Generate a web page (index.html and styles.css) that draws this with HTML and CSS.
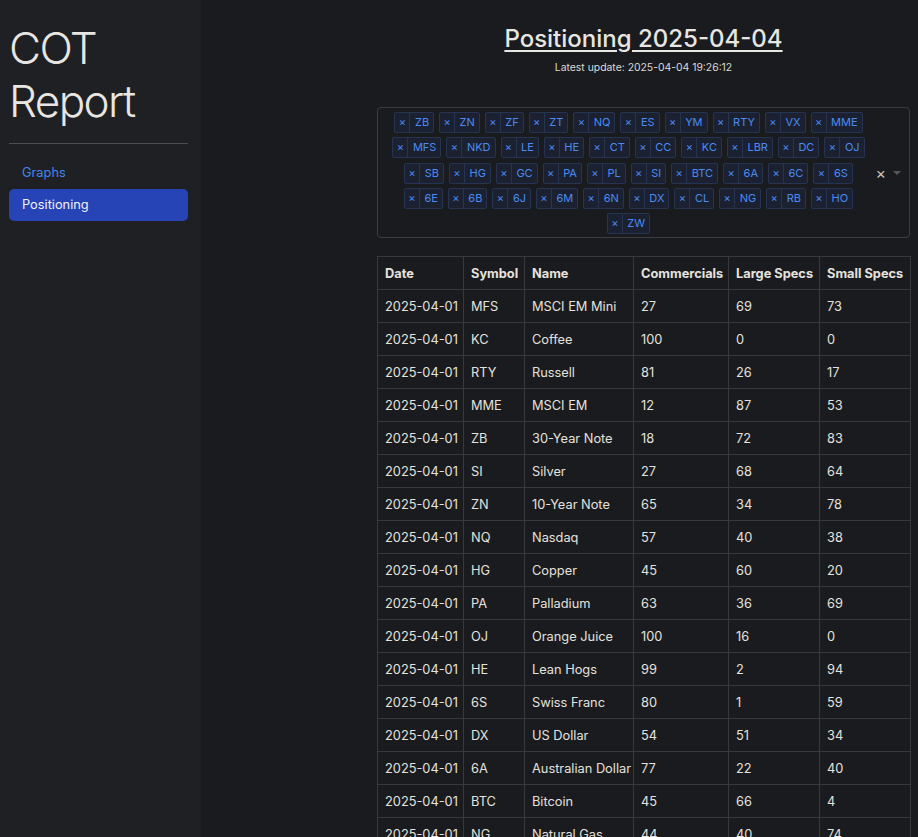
FILE: index.html
```html
<!DOCTYPE html>
<html lang="en">
<head>
<meta charset="utf-8">
<title>COT Report</title>
<link rel="stylesheet" href="styles.css">
</head>
<body>
<div class="app">
  <aside class="sidebar">
    <h1 class="brand">COT Report</h1>
    <hr class="rule">
    <nav class="nav">
      <a class="nav-link" href="#">Graphs</a>
      <a class="nav-link active" href="#">Positioning</a>
    </nav>
  </aside>
  <main class="main">
    <div class="content">
      <h2 class="page-title">Positioning 2025-04-04</h2>
      <p class="updated">Latest update: 2025-04-04 19:26:12</p>
      <div class="select">
        <div class="values">
          <span class="tag"><span class="tag-x">×</span><span class="tag-label">ZB</span></span>
          <span class="tag"><span class="tag-x">×</span><span class="tag-label">ZN</span></span>
          <span class="tag"><span class="tag-x">×</span><span class="tag-label">ZF</span></span>
          <span class="tag"><span class="tag-x">×</span><span class="tag-label">ZT</span></span>
          <span class="tag"><span class="tag-x">×</span><span class="tag-label">NQ</span></span>
          <span class="tag"><span class="tag-x">×</span><span class="tag-label">ES</span></span>
          <span class="tag"><span class="tag-x">×</span><span class="tag-label">YM</span></span>
          <span class="tag"><span class="tag-x">×</span><span class="tag-label">RTY</span></span>
          <span class="tag"><span class="tag-x">×</span><span class="tag-label">VX</span></span>
          <span class="tag"><span class="tag-x">×</span><span class="tag-label">MME</span></span>
          <span class="tag"><span class="tag-x">×</span><span class="tag-label">MFS</span></span>
          <span class="tag"><span class="tag-x">×</span><span class="tag-label">NKD</span></span>
          <span class="tag"><span class="tag-x">×</span><span class="tag-label">LE</span></span>
          <span class="tag"><span class="tag-x">×</span><span class="tag-label">HE</span></span>
          <span class="tag"><span class="tag-x">×</span><span class="tag-label">CT</span></span>
          <span class="tag"><span class="tag-x">×</span><span class="tag-label">CC</span></span>
          <span class="tag"><span class="tag-x">×</span><span class="tag-label">KC</span></span>
          <span class="tag"><span class="tag-x">×</span><span class="tag-label">LBR</span></span>
          <span class="tag"><span class="tag-x">×</span><span class="tag-label">DC</span></span>
          <span class="tag"><span class="tag-x">×</span><span class="tag-label">OJ</span></span>
          <span class="tag"><span class="tag-x">×</span><span class="tag-label">SB</span></span>
          <span class="tag"><span class="tag-x">×</span><span class="tag-label">HG</span></span>
          <span class="tag"><span class="tag-x">×</span><span class="tag-label">GC</span></span>
          <span class="tag"><span class="tag-x">×</span><span class="tag-label">PA</span></span>
          <span class="tag"><span class="tag-x">×</span><span class="tag-label">PL</span></span>
          <span class="tag"><span class="tag-x">×</span><span class="tag-label">SI</span></span>
          <span class="tag"><span class="tag-x">×</span><span class="tag-label">BTC</span></span>
          <span class="tag"><span class="tag-x">×</span><span class="tag-label">6A</span></span>
          <span class="tag"><span class="tag-x">×</span><span class="tag-label">6C</span></span>
          <span class="tag"><span class="tag-x">×</span><span class="tag-label">6S</span></span>
          <span class="tag"><span class="tag-x">×</span><span class="tag-label">6E</span></span>
          <span class="tag"><span class="tag-x">×</span><span class="tag-label">6B</span></span>
          <span class="tag"><span class="tag-x">×</span><span class="tag-label">6J</span></span>
          <span class="tag"><span class="tag-x">×</span><span class="tag-label">6M</span></span>
          <span class="tag"><span class="tag-x">×</span><span class="tag-label">6N</span></span>
          <span class="tag"><span class="tag-x">×</span><span class="tag-label">DX</span></span>
          <span class="tag"><span class="tag-x">×</span><span class="tag-label">CL</span></span>
          <span class="tag"><span class="tag-x">×</span><span class="tag-label">NG</span></span>
          <span class="tag"><span class="tag-x">×</span><span class="tag-label">RB</span></span>
          <span class="tag"><span class="tag-x">×</span><span class="tag-label">HO</span></span>
          <span class="tag"><span class="tag-x">×</span><span class="tag-label">ZW</span></span>
        </div>
        <div class="indicators">
          <span class="clear">×</span>
          <span class="arrow"></span>
        </div>
      </div>
      <table class="grid">
        <colgroup>
          <col class="c-date"><col class="c-sym"><col class="c-name"><col class="c-com"><col class="c-large"><col class="c-small">
        </colgroup>
        <thead>
          <tr><th>Date</th><th>Symbol</th><th>Name</th><th>Commercials</th><th>Large Specs</th><th>Small Specs</th></tr>
        </thead>
        <tbody>
          <tr><td>2025-04-01</td><td>MFS</td><td>MSCI EM Mini</td><td>27</td><td>69</td><td>73</td></tr>
          <tr><td>2025-04-01</td><td>KC</td><td>Coffee</td><td>100</td><td>0</td><td>0</td></tr>
          <tr><td>2025-04-01</td><td>RTY</td><td>Russell</td><td>81</td><td>26</td><td>17</td></tr>
          <tr><td>2025-04-01</td><td>MME</td><td>MSCI EM</td><td>12</td><td>87</td><td>53</td></tr>
          <tr><td>2025-04-01</td><td>ZB</td><td>30-Year Note</td><td>18</td><td>72</td><td>83</td></tr>
          <tr><td>2025-04-01</td><td>SI</td><td>Silver</td><td>27</td><td>68</td><td>64</td></tr>
          <tr><td>2025-04-01</td><td>ZN</td><td>10-Year Note</td><td>65</td><td>34</td><td>78</td></tr>
          <tr><td>2025-04-01</td><td>NQ</td><td>Nasdaq</td><td>57</td><td>40</td><td>38</td></tr>
          <tr><td>2025-04-01</td><td>HG</td><td>Copper</td><td>45</td><td>60</td><td>20</td></tr>
          <tr><td>2025-04-01</td><td>PA</td><td>Palladium</td><td>63</td><td>36</td><td>69</td></tr>
          <tr><td>2025-04-01</td><td>OJ</td><td>Orange Juice</td><td>100</td><td>16</td><td>0</td></tr>
          <tr><td>2025-04-01</td><td>HE</td><td>Lean Hogs</td><td>99</td><td>2</td><td>94</td></tr>
          <tr><td>2025-04-01</td><td>6S</td><td>Swiss Franc</td><td>80</td><td>1</td><td>59</td></tr>
          <tr><td>2025-04-01</td><td>DX</td><td>US Dollar</td><td>54</td><td>51</td><td>34</td></tr>
          <tr><td>2025-04-01</td><td>6A</td><td>Australian Dollar</td><td>77</td><td>22</td><td>40</td></tr>
          <tr><td>2025-04-01</td><td>BTC</td><td>Bitcoin</td><td>45</td><td>66</td><td>4</td></tr>
          <tr><td>2025-04-01</td><td>NG</td><td>Natural Gas</td><td>44</td><td>40</td><td>74</td></tr>
        </tbody>
      </table>
    </div>
  </main>
</div>
</body>
</html>
```
FILE: styles.css
```css
html, body {
  margin: 0;
  padding: 0;
  background: #1a1b1e;
  color: #e6e4e0;
  font-family: Inter, "Noto Sans", "Liberation Sans", sans-serif;
}

.app {
  display: flex;
  min-height: 100vh;
}

.sidebar {
  flex: 0 0 auto;
  width: 179px;
  padding: 22px 13px 0 9px;
  background: #1f2023;
  min-height: 100vh;
}

.brand {
  margin: 0;
  font-size: 44px;
  font-weight: 300;
  line-height: 52.8px;
  letter-spacing: -1.6px;
  color: #e8e6e2;
}

.rule {
  margin: 15px 0 13px;
  border: 0;
  border-top: 1px solid #4b4c4e;
}

.nav {
  display: flex;
  flex-direction: column;
}

.nav-link {
  display: block;
  height: 32px;
  line-height: 32px;
  padding: 0 13px;
  font-size: 12.8px;
  color: #3f86f0;
  text-decoration: none;
  border-radius: 5px;
}

.nav-link.active {
  background: #2644b5;
  color: #f2f2f2;
}

.main {
  flex: 1 1 auto;
  padding: 0 8px 0 176px;
}

.content {
  width: 533px;
}

.page-title {
  margin: 23px 0 0;
  text-align: center;
  font-size: 24px;
  font-weight: 500;
  line-height: 31px;
  text-decoration: underline;
  text-decoration-thickness: 2px;
  text-underline-offset: 3px;
  color: #e8e6e2;
}

.updated {
  margin: 6px 0 0;
  text-align: center;
  font-size: 10.4px;
  line-height: 16px;
  color: #dcdad6;
}

.select {
  margin-top: 31px;
  display: flex;
  align-items: center;
  border: 1px solid #3b3c3f;
  border-radius: 4px;
  padding: 4px 0 3px;
}

.values {
  flex: 1 1 auto;
  display: flex;
  flex-wrap: wrap;
  justify-content: center;
  gap: 4.25px 5px;
  padding: 0 0 0 10px;
}

.tag {
  display: inline-flex;
  height: 21px;
  box-sizing: border-box;
  border: 1px solid #263451;
  background: #1b2130;
  border-radius: 2px;
  color: #4a8bf3;
  font-size: 11px;
  line-height: 19px;
}

.tag-x {
  width: 14px;
  text-align: center;
  border-right: 1px solid #263451;
  font-size: 11px;
}

.tag-label {
  padding: 0 4px 0 4.5px;
}

.indicators {
  flex: 0 0 auto;
  box-sizing: border-box;
  width: 40px;
  display: flex;
  align-items: center;
  justify-content: flex-end;
  gap: 7px;
  padding: 0 8px 0 0;
}

.clear {
  color: #c9c5bd;
  font-size: 16px;
  line-height: 1;
}

.arrow {
  width: 0;
  height: 0;
  border-left: 4px solid transparent;
  border-right: 4px solid transparent;
  border-top: 4px solid #55565a;
}

.grid {
  margin-top: 18px;
  width: 533px;
  table-layout: fixed;
  border-collapse: collapse;
  font-size: 12.8px;
  color: #e4e2de;
}

.c-date { width: 86px; }
.c-sym { width: 61px; }
.c-name { width: 109px; }
.c-com { width: 95px; }
.c-large { width: 91px; }
.c-small { width: 91px; }

.grid th,
.grid td {
  height: 32px;
  padding: 0 7px;
  text-align: left;
  white-space: nowrap;
  border: 1px solid #38393c;
}

.grid th {
  font-weight: 700;
}
```
